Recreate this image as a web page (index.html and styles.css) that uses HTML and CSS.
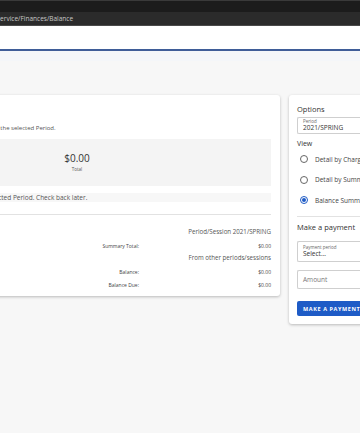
FILE: index.html
```html
<!DOCTYPE html>
<html lang="en">
<head>
    <meta charset="UTF-8">
    <meta name="viewport" content="width=device-width, initial-scale=1.0">
    <title>Balance</title>
    <link rel="stylesheet" href="styles.css">
</head>
<body>

    <div class="chrome">
        <div class="chrome-tabs"></div>
        <div class="chrome-address">service/Finances/Balance</div>
    </div>

    <div class="app-header"></div>
    <div class="header-shade"></div>

    <div class="main">
        <div class="card balance-card">
            <p class="intro">Your account balance summary is shown for the selected Period.</p>

            <div class="tiles">
                <div class="tile tile-wide">
                    <div class="tile-amount">$0.00</div>
                    <div class="tile-label">Charges</div>
                </div>
                <div class="tile">
                    <div class="tile-amount">$0.00</div>
                    <div class="tile-label">Total</div>
                </div>
            </div>

            <div class="notice">There are no details for the selected Period. Check back later.</div>

            <div class="summary">
                <div class="summary-head">Period/Session 2021/SPRING</div>
                <div class="summary-label">Summary Total:</div>
                <div class="summary-value">$0.00</div>
                <div class="summary-head">From other periods/sessions</div>
                <div class="summary-label">Balance:</div>
                <div class="summary-value">$0.00</div>
                <div class="summary-label">Balance Due:</div>
                <div class="summary-value">$0.00</div>
            </div>
        </div>

        <div class="card options-card">
            <div class="section-title">Options</div>
            <div class="field field-period">
                <span class="field-label">Period</span>
                <span class="field-value">2021/SPRING</span>
            </div>

            <div class="view-title">View</div>
            <div class="radio-list">
                <label class="radio-row"><span class="radio"></span>Detail by Charge</label>
                <label class="radio-row"><span class="radio"></span>Detail by Summary</label>
                <label class="radio-row"><span class="radio checked"></span>Balance Summary</label>
            </div>

            <div class="divider"></div>

            <div class="section-title">Make a payment</div>
            <div class="field field-select">
                <span class="field-label">Payment period</span>
                <span class="field-value">Select...</span>
            </div>
            <div class="field field-amount">Amount</div>
            <button class="pay-button">MAKE A PAYMENT</button>
        </div>
    </div>

</body>
</html>
```

FILE: styles.css
```css
body {
    font-family: 'Open Sans', 'Noto Sans', sans-serif;
    background: #f7f7f7;
    margin: 0;
    padding: 0;
    height: 433px;
    overflow: hidden;
    color: #444;
}

.chrome {
    background: #1c1c1c;
    border-top: 1px solid #3a3a3a;
}

.chrome-tabs {
    height: 11px;
}

.chrome-address {
    height: 13px;
    background: #2b2b2b;
    border-bottom: 1px solid #4a4a4a;
    color: #c8c8c8;
    font-size: 6.5px;
    line-height: 14px;
    white-space: nowrap;
    text-indent: -3px;
}

.app-header {
    height: 23px;
    background: #fff;
    border-bottom: 2px solid #3f5d98;
}

.header-shade {
    height: 10px;
    background: #f4f6f9;
}

.main {
    display: flex;
    align-items: flex-start;
    gap: 9px;
    margin-left: -120px;
    padding-top: 34px;
}

.card {
    background: #fff;
    border-radius: 3px;
    box-shadow: 0 1px 3px rgba(0, 0, 0, 0.25);
    flex-shrink: 0;
}

/* left card */

.balance-card {
    width: 391px;
    height: 201px;
    padding: 0 9px 0 0;
    box-sizing: content-box;
}

.balance-card > * {
    margin-left: 9px;
}

.balance-card > .intro {
    margin: 0 0 0 -5px;
    padding-top: 29px;
    height: 15px;
    font-size: 6px;
    line-height: 8px;
    white-space: nowrap;
    color: #555;
}

.tiles {
    display: flex;
    height: 47px;
    background: #f4f4f4;
}

.tile {
    width: 110px;
    text-align: center;
    padding-top: 12px;
}

.tile-wide {
    width: 133px;
}

.tile-amount {
    font-size: 10px;
    line-height: 14px;
    color: #333;
}

.tile-label {
    font-size: 4.5px;
    line-height: 9px;
    color: #555;
}

.balance-card > .notice {
    margin: 7px 0 0 9px;
    height: 9px;
    background: #f7f7f7;
    font-size: 6.5px;
    line-height: 9px;
    white-space: nowrap;
    color: #555;
    text-indent: 13px;
}

.summary {
    margin-top: 12px;
    border-top: 1px solid #e2e2e2;
    display: grid;
    grid-template-columns: 1fr 132px;
    padding-top: 12px;
}

.summary-head {
    grid-column: 1 / 3;
    text-align: right;
    font-size: 6.2px;
    line-height: 10px;
    margin-bottom: 2px;
    color: #555;
}

.summary-head + .summary-label,
.summary-head + .summary-label + .summary-value {
    margin-top: 1px;
}

.summary-label,
.summary-value {
    text-align: right;
    font-size: 5px;
    line-height: 13px;
    color: #444;
}

/* right card */

.options-card {
    width: 100px;
    padding: 0 0 8px 8px;
    color: #333;
}

.section-title {
    font-size: 7.5px;
    line-height: 10px;
    padding-top: 9px;
    color: #333;
}

.field {
    margin-top: 3px;
    border: 1px solid #cfcfcf;
    border-right: none;
    border-radius: 2px 0 0 2px;
    padding-left: 5px;
    display: flex;
    flex-direction: column;
    justify-content: center;
    box-sizing: border-box;
}

.field-period {
    height: 17px;
}

.field-label {
    font-size: 4.5px;
    line-height: 5px;
    color: #666;
}

.field-value {
    font-size: 6.5px;
    line-height: 8px;
    color: #333;
}

.view-title {
    margin-top: 5px;
    font-size: 7px;
    line-height: 10px;
}

.radio-list {
    display: flex;
    flex-direction: column;
    gap: 10.5px;
    margin-top: 5px;
    padding-left: 3px;
}

.radio-row {
    display: flex;
    align-items: center;
    gap: 7px;
    height: 10px;
    font-size: 6.5px;
    white-space: nowrap;
    color: #444;
}

.radio {
    width: 8px;
    height: 8px;
    border: 1px solid #666;
    border-radius: 50%;
    box-sizing: border-box;
    display: flex;
    align-items: center;
    justify-content: center;
}

.radio.checked {
    border-color: #1e5bc6;
}

.radio.checked::after {
    content: '';
    width: 4px;
    height: 4px;
    border-radius: 50%;
    background: #1e5bc6;
}

.divider {
    margin-top: 11px;
    border-top: 1px solid #e2e2e2;
}

.options-card .divider + .section-title {
    padding-top: 5px;
}

.field-select {
    margin-top: 9px;
    height: 21px;
}

.field-amount {
    margin-top: 8px;
    height: 19px;
    font-size: 6.5px;
    color: #777;
}

.pay-button {
    display: block;
    margin-top: 12px;
    width: 100%;
    height: 15px;
    border: none;
    border-radius: 2px 0 0 2px;
    background: #1e5bc6;
    color: #fff;
    font-family: inherit;
    font-size: 5.5px;
    font-weight: 700;
    letter-spacing: 0.6px;
    text-align: left;
    padding-left: 6px;
}
```
